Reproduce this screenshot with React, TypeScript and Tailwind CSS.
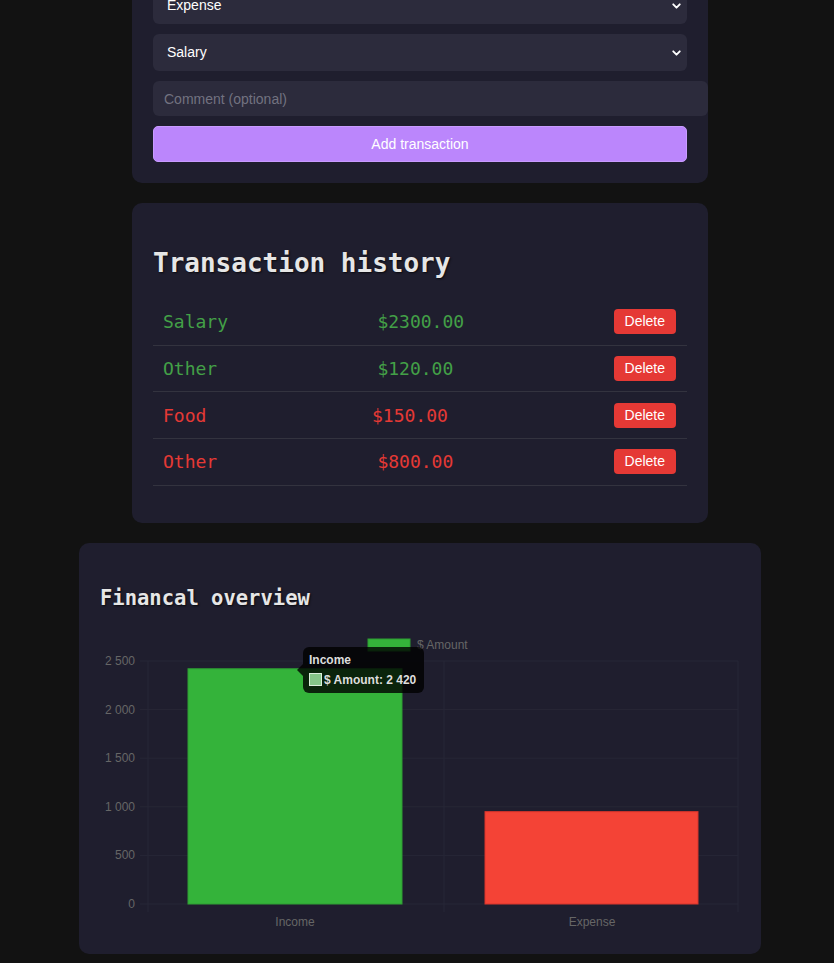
import { ChevronDown } from "lucide-react";

type Tx = { id: number; category: string; amount: number; type: "income" | "expense" };

const transactions: Tx[] = [
  { id: 1, category: "Salary", amount: 2300, type: "income" },
  { id: 2, category: "Other", amount: 120, type: "income" },
  { id: 3, category: "Food", amount: 150, type: "expense" },
  { id: 4, category: "Other", amount: 800, type: "expense" },
];

const mono = "font-['DejaVu_Sans_Mono','Liberation_Mono',monospace]";
const sans = "font-['Liberation_Sans',Arial,sans-serif]";

function SelectBox({ value }: { value: string }) {
  return (
    <div className="relative">
      <select
        defaultValue={value}
        className={`w-full h-[37px] appearance-none rounded-md bg-[#2c2b3c] pl-[14px] pr-8 text-[14px] text-white outline-none ${sans}`}
      >
        <option>{value}</option>
      </select>
      <ChevronDown
        size={13}
        strokeWidth={3.5}
        className="pointer-events-none absolute right-[4px] top-1/2 -translate-y-1/2 text-white"
      />
    </div>
  );
}

function FinanceChart({ income, expense }: { income: number; expense: number }) {
  const base = 274;
  const step = 48.6;
  const y = (v: number) => base - (v / 500) * step;
  const ticks = [0, 500, 1000, 1500, 2000, 2500];
  const fmt = (n: number) => n.toLocaleString("fr-FR").replace(/\u202f|\u00a0/g, " ");

  return (
    <div className="relative h-[310px] w-[640px]">
      <svg width="640" height="310" className={sans}>
        {ticks.map((t) => (
          <g key={t}>
            <line x1={40} x2={638} y1={y(t)} y2={y(t)} stroke="#272736" strokeWidth={1} />
            <text x={35} y={y(t) + 4} textAnchor="end" fontSize={12} fill="#666">
              {fmt(t)}
            </text>
          </g>
        ))}
        {[48, 344, 638].map((x) => (
          <line key={x} x1={x} x2={x} y1={y(2500)} y2={base + 8} stroke="#272736" strokeWidth={1} />
        ))}
        <rect x={88} y={y(income)} width={214} height={base - y(income)} fill="#34b33a" stroke="#2e9e33" />
        <rect x={385} y={y(expense)} width={213} height={base - y(expense)} fill="#f44336" stroke="#d9352b" />
        <text x={195} y={296} textAnchor="middle" fontSize={12} fill="#666">Income</text>
        <text x={492} y={296} textAnchor="middle" fontSize={12} fill="#666">Expense</text>
        <rect x={268} y={9} width={42} height={12} fill="#34b33a" stroke="#2e9e33" />
        <text x={317} y={19} fontSize={12} fill="#666">$ Amount</text>
      </svg>

      <div className={`absolute left-[203px] top-[17px] w-[121px] rounded-md bg-black/80 px-[6px] py-[5px] text-[12px] ${sans}`}>
        <span className="absolute -left-[6px] top-[17px] h-0 w-0 border-y-[6px] border-r-[6px] border-y-transparent border-r-black/80" />
        <div className="font-bold leading-[16px] text-[#ddd]">Income</div>
        <div className="mt-[4px] flex items-center gap-[2px] font-bold leading-[16px] text-[#ddd]">
          <span className="inline-block h-[13px] w-[13px] border border-white/70 bg-[#86c589]" />
          $ Amount: {fmt(income)}
        </div>
      </div>
    </div>
  );
}

export default function App() {
  const income = transactions.filter((t) => t.type === "income").reduce((s, t) => s + t.amount, 0);
  const expense = transactions.filter((t) => t.type === "expense").reduce((s, t) => s + t.amount, 0);

  return (
    <div className="min-h-screen overflow-hidden bg-[#121212] pl-[6px]">
      <div className="flex flex-col items-center gap-[20px] pb-[20px]">
        {/* form */}
        <div className="-mt-[34px] w-[576px] rounded-[10px] bg-[#1f1e2e] px-[21px] pb-[21px] pt-[21px]">
          <div className="flex flex-col gap-[10px]">
            <SelectBox value="Expense" />
            <SelectBox value="Salary" />
            <input
              type="text"
              placeholder="Comment (optional)"
              className={`h-[35px] w-[555px] rounded-md bg-[#2c2b3c] px-[11px] text-[14px] text-white outline-none placeholder:text-[#727280] ${sans}`}
            />
            <button
              className={`h-[36px] w-full rounded-[5px] border border-[#c89bff] bg-[#bb86fc] text-[14px] font-medium text-white ${sans}`}
            >
              Add transaction
            </button>
          </div>
        </div>

        {/* history */}
        <div className="w-[576px] rounded-[10px] bg-[#1f1e2e] px-[21px] pb-[37px] pt-[21px]">
          <h2
            className={`mb-[20px] mt-[24px] text-[26px] font-bold leading-[31px] text-[#e6e6e6] [text-shadow:1px_1px_2px_rgba(0,0,0,0.7)] ${mono}`}
          >
            Transaction history
          </h2>
          <ul>
            {transactions.map((t) => (
              <li
                key={t.id}
                className="flex h-[46.7px] items-center justify-between border-b border-[#33333f] pl-[10px] pr-[11px]"
              >
                <span className={`text-[18px] ${mono} ${t.type === "income" ? "text-[#43a047]" : "text-[#e53935]"}`}>
                  {t.category}
                </span>
                <span className={`text-[18px] ${mono} ${t.type === "income" ? "text-[#43a047]" : "text-[#e53935]"}`}>
                  ${t.amount.toFixed(2)}
                </span>
                <button
                  className={`h-[25px] rounded-[4px] bg-[#e53935] px-[11px] text-[14px] text-white ${sans}`}
                >
                  Delete
                </button>
              </li>
            ))}
          </ul>
        </div>

        {/* chart */}
        <div className="w-[682px] rounded-[10px] bg-[#1f1e2e] px-[21px] pb-[14px] pt-[21px]">
          <h2
            className={`mb-[19px] mt-[22px] text-[20.5px] font-bold leading-[25px] text-[#e6e6e6] [text-shadow:1px_1px_2px_rgba(0,0,0,0.7)] ${mono}`}
          >
            Financal overview
          </h2>
          <FinanceChart income={income} expense={expense} />
        </div>
      </div>
    </div>
  );
}
